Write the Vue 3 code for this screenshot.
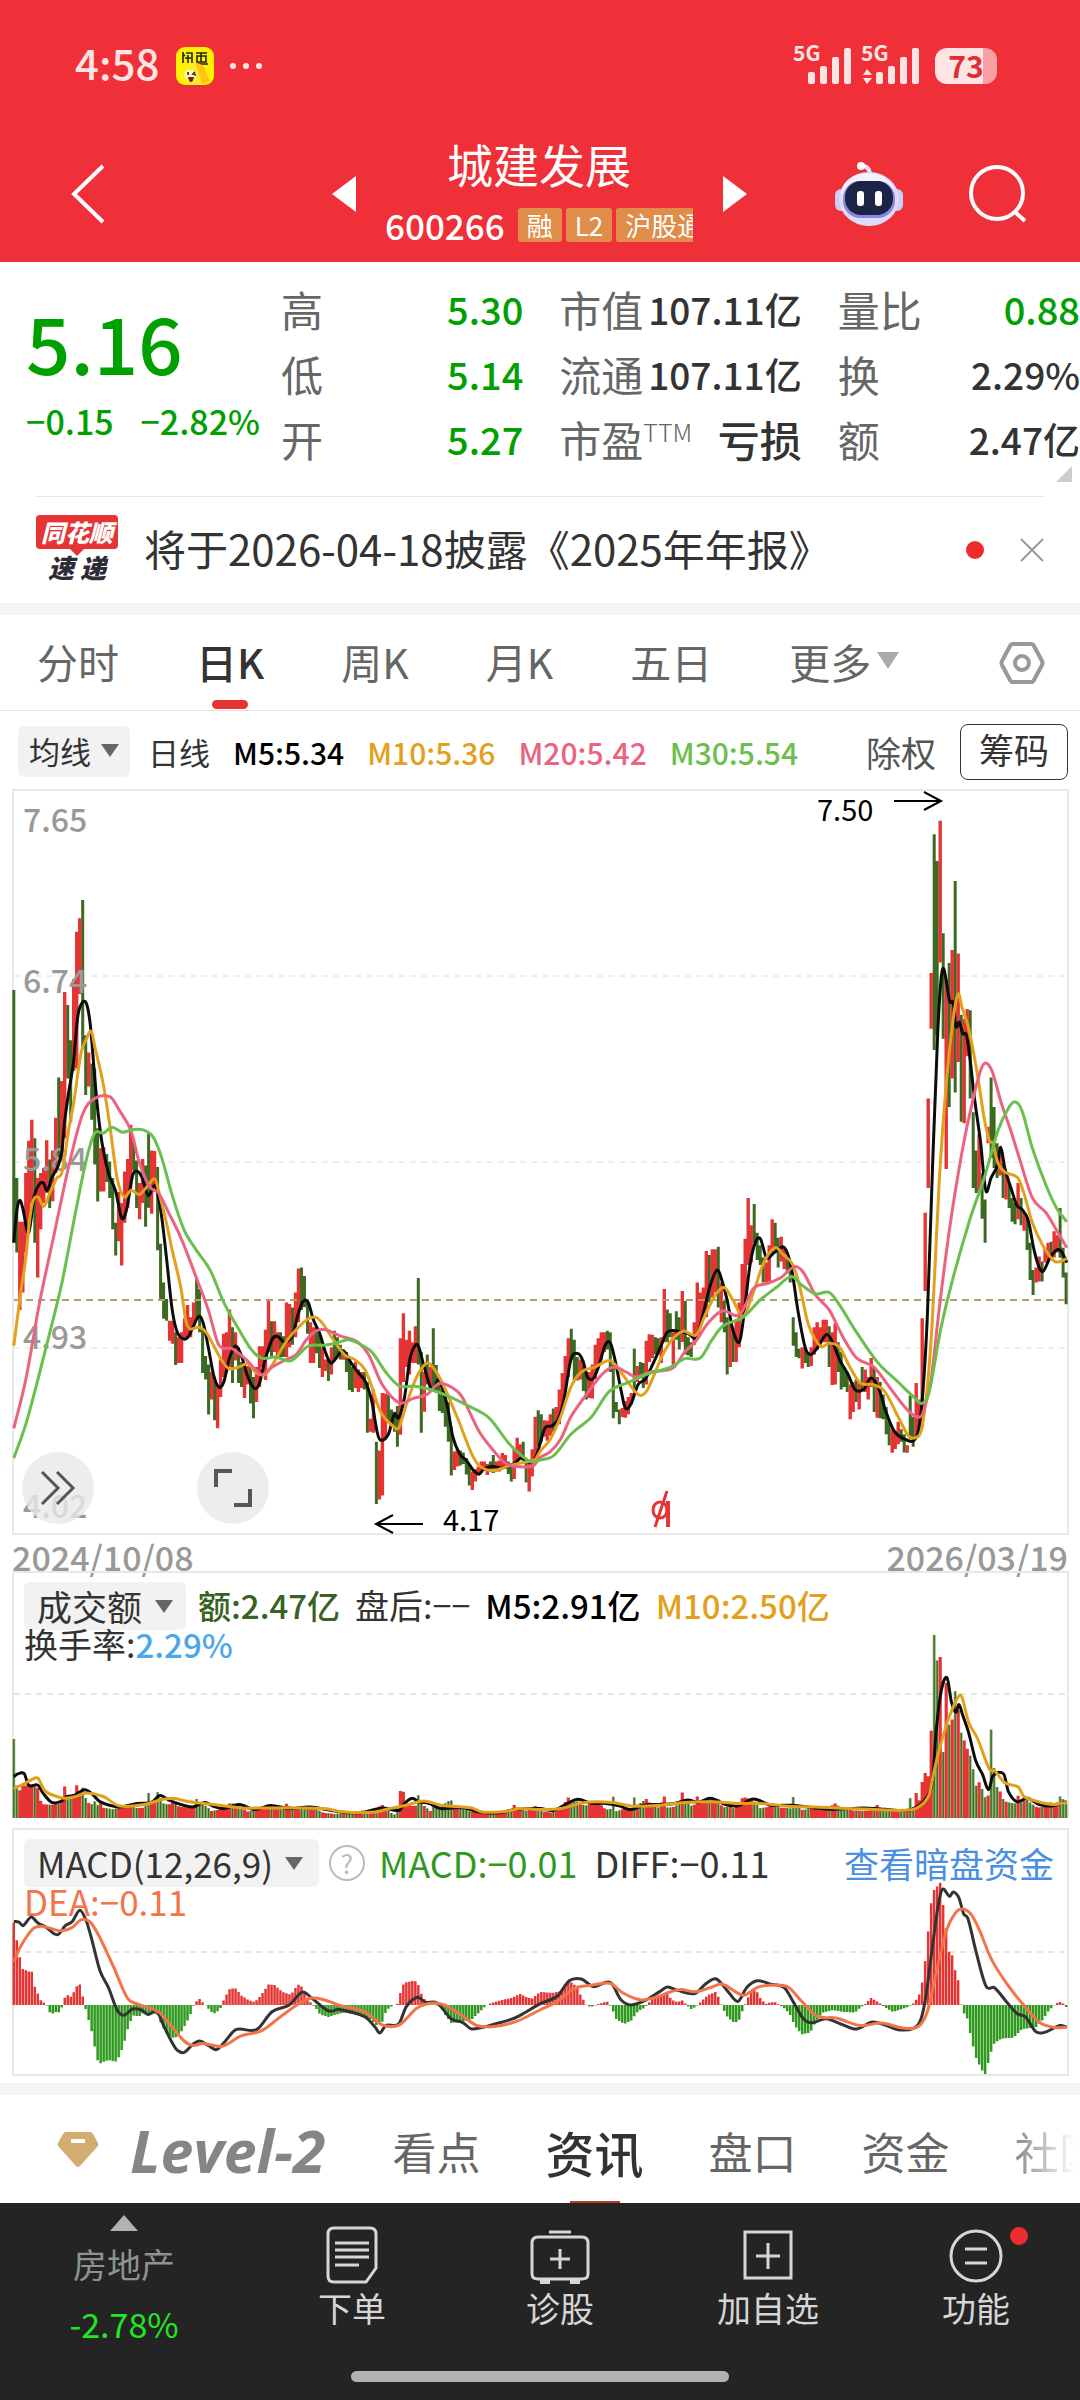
<script setup>
import { ref } from 'vue'

/* Chart data is stored in chart units; UX and UY are units per pixel. */
const UX = 2.904
const UY = 2.01
const HALF = 1568

const sx = (x) => Math.round((x / UX) * 10) / 10
const priceY = (y) => Math.round((y / UY) * 10) / 10
const volumeY = (y) => Math.round((y / UX - 31) * 10) / 10
const macdY = (y) => Math.round((y / UX - 288) * 10) / 10

const candlesA = `g422-930 g800-950 r888-1065 r888-1030 r790-950 r725-900 r683-850 g720-930 r800-1000 r790-903 r780-850 r724-830 g763-860 r745-847 r679-790 g598-770 r605-760 r426-720 g452-600 g523-688 r400-585 r305-580 r278-430 g241-535 g513-633 r548-616 g570-683 g580-773 g700-847 r740-827 r738-827 g752-808 g767-840 g800-903 g890-956 r828-927 r850-976 r787-890 r762-860 r693-820 g725-785 g765-860 r810-883 r762-850 g775-898 g709-860 r745-872 r746-825 g778-945 g932-1045 g1010-1083 g1043-1087 r1087-1127 r1087-1133 g1110-1176 r1120-1172 r1110-1172 r1082-1125 r1055-1120 r1080-1120 r1050-1105 g1000-1085 g1023-1110 g1100-1192 g1158-1205 g1175-1275 r1190-1245 g1200-1287 r1215-1303 r1165-1240 r1113-1200 r1110-1190 r1064-1180 g1100-1212 r1110-1167 g1140-1212 g1170-1220 r1180-1242 r1178-1215 g1180-1253 g1200-1283 r1180-1250 r1138-1220 r1138-1180 r1105-1206 r1047-1150 g1088-1160 r1088-1150 r1110-1160 g1110-1160 g1118-1160 r1050-1160 r1053-1140 g1060-1135 r1030-1120 r982-1090 g980-1065 g997-1060 g1045-1113 r1090-1172 r1100-1172 g1100-1152 g1115-1182 r1140-1200 r1165-1188 g1165-1208 r1140-1195 g1107-1165 g1120-1160 g1135-1165 r1145-1165 g1150-1190 g1160-1226 g1180-1230 r1170-1222 r1185-1230 r1190-1222 g1190-1225 g1210-1312 r1284-1310 r1225-1312 g1330-1455 r1348-1446 r1232-1438 r1233-1325 g1235-1290 g1265-1298 g1270-1310 g1258-1340 r1122-1316 r1072-1210 r1125-1180 r1107-1195 r1130-1172 r1098-1172 g1001-1175 g1150-1312 r1190-1270 g1155-1215 r1180-1220 g1102-1220 g1176-1232 g1210-1268 g1225-1272 g1230-1300 g1250-1330 g1300-1398 r1350-1387 r1345-1380 g1348-1378 g1352-1375 g1363-1396 g1375-1418 r1390-1427 r1385-1410 r1380-1398 r1370-1390 r1370-1388 r1375-1397 g1370-1390 g1357-1393 r1370-1390 r1368-1390 r1353-1385 r1357-1385 g1370-1395 g1375-1410 r1345-1405 r1322-1370 r1335-1365 g1330-1370 g1363-1412 r1370-1430 r1345-1400 r1280-1375 g1267-1340`
const candlesB = `g1275-1330 r1287-1320 r1288-1328 r1275-1318 g1263-1310 r1260-1300 r1225-1295 r1192-1270 r1158-1230 r1122-1200 g1103-1165 g1125-1207 g1160-1207 r1165-1205 g1175-1228 g1190-1245 r1190-1242 r1175-1243 r1135-1205 r1122-1180 r1110-1165 r1110-1150 g1107-1145 g1110-1190 g1175-1283 g1250-1270 g1265-1295 r1262-1280 r1248-1282 r1240-1275 r1232-1255 g1143-1230 r1178-1210 g1170-1200 g1172-1222 r1127-1215 r1114-1170 r1115-1162 g1120-1155 g1122-1155 r1120-1172 r1023-1130 g1064-1130 g1072-1120 r1110-1180 g1068-1125 g1080-1145 r1027-1130 g1047-1155 g1120-1157 g1130-1160 r1090-1135 r1010-1125 r1030-1100 r1020-1080 r947-1080 g955-1050 r943-1040 r943-1030 g938-1060 r1010-1090 g1045-1110 g1080-1195 r1090-1180 g1100-1170 r1085-1170 r1050-1140 r973-1080 r922-1050 r840-975 r895-970 g852-930 g910-965 g935-975 g960-1010 r970-1010 r935-1008 r883-950 g890-945 g920-980 r918-968 r940-983 g960-990 g970-1010 g1080-1137 g1110-1160 g1143-1162 r1140-1183 g1140-1172 g1150-1180 r1140-1178 r1100-1155 r1090-1145 r1100-1135 r1085-1130 r1085-1130 g1098-1180 r1110-1216 r1092-1215 g1130-1190 g1150-1225 g1180-1220 g1190-1230 r1215-1285 r1210-1270 g1205-1250 r1210-1265 g1180-1228 r1185-1230 r1200-1245 r1162-1220 g1180-1270 r1200-1282 g1210-1283 g1235-1285 g1260-1315 g1290-1337 r1305-1352 r1310-1345 r1290-1335 g1305-1330 g1315-1352 r1337-1352 g1237-1325 g1280-1340 r1212-1320 r1245-1310 r1082-1300 r870-1027 r640-820 r388-500 g109-543 g163-513 r82-367 g308-520 r400-782 g368-657 r342-600 g203-628 r349-567 g472-687 r480-690 r460-555 g463-640 g668-820 g745-830 r712-830 g790-882 g843-930 r697-730 g598-760 g657-780 g730-800 r750-795 g770-840 r790-843 g810-860 g840-888 g850-893 r810-883 g840-895 r870-906 g880-945 g930-1005 g985-1035 r980-1010 r958-1008 g968-1008 r942-970 r930-965 g928-960 r907-960 r915-950 g860-960 g940-1000 g990-1054`

const parseCandles = (text, from, to) => {
  const items = text.split(' ')
  const step = (to - from) / (items.length - 1)
  return items.map((item, i) => {
    const [top, bottom] = item.slice(1).split('-').map(Number)
    return { x: from + i * step, up: item[0] === 'r', top, bottom }
  })
}
const candles = [...parseCandles(candlesA, 40, 1563), ...parseCandles(candlesB, HALF + 4, HALF + 1528)]

const points = (left, right) => {
  const read = (text, shift) =>
    text.split(' ').map((pair) => {
      const [x, y] = pair.split(/[,:]/).map(Number)
      return [x + shift, y]
    })
  return [...read(left, 0), ...read(right, HALF)]
}

/* Smooth path through the points */
const curve = (list, toY) => {
  const p = list.map(([x, y]) => [sx(x), toY(y)])
  let d = `M${p[0][0]} ${p[0][1]}`
  for (let i = 0; i < p.length - 1; i++) {
    const a = p[Math.max(i - 1, 0)]
    const b = p[i]
    const c = p[i + 1]
    const e = p[Math.min(i + 2, p.length - 1)]
    const n = (v) => v.toFixed(1)
    const k = (c[0] - b[0]) / 3
    const sb = (c[1] - a[1]) / (c[0] - a[0] || 1)
    const sc = (e[1] - b[1]) / (e[0] - b[0] || 1)
    d += `C${n(b[0] + k)} ${n(b[1] + sb * k)} ${n(c[0] - k)} ${n(c[1] - sc * k)} ${c[0]} ${c[1]}`
  }
  return d
}

const sample = (list, x) => {
  if (x <= list[0][0]) return list[0][1]
  for (let i = 1; i < list.length; i++) {
    if (x <= list[i][0]) {
      const [x0, y0] = list[i - 1]
      const [x1, y1] = list[i]
      return y0 + ((y1 - y0) * (x - x0)) / (x1 - x0)
    }
  }
  return list[list.length - 1][1]
}

const ma30 = curve(points('40,1363 75,1295 110,1205 145,1110 180,1010 215,885 250,765 275,710 300,710 325,698 355,708 385,703 415,703 445,718 470,760 500,835 535,905 570,945 610,985 650,1050 690,1100 730,1145 760,1162 800,1160 845,1167 895,1138 940,1136 975,1132 1010,1125 1040,1132 1080,1150 1120,1190 1160,1218 1200,1218 1250,1225 1300,1238 1360,1258 1420,1282 1480,1335 1540,1370', '0,1367 40,1358 90,1315 150,1280 200,1230 260,1210 320,1192 380,1180 420,1163 465,1162 500,1125 530,1098 590,1080 640,1045 690,1018 730,998 760,1015 800,1033 840,1030 870,1055 910,1100 980,1170 1040,1210 1085,1240 1110,1253 1130,1230 1165,1100 1200,1000 1250,880 1290,800 1330,705 1360,660 1380,647 1400,665 1430,740 1470,815 1500,860 1530,888'), priceY)
const ma20 = curve(points('40,1303 75,1205 115,1050 155,920 200,775 240,672 275,640 320,637 345,662 380,705 405,770 435,818 460,830 490,870 525,920 570,1000 605,1065 635,1135 675,1143 715,1165 760,1195 790,1180 830,1165 860,1155 890,1125 920,1107 945,1105 990,1118 1035,1128 1070,1155 1110,1215 1160,1252 1200,1243 1240,1235 1275,1213 1310,1220 1340,1238 1390,1308 1430,1345 1465,1372 1500,1380 1550,1378', '0,1362 30,1350 60,1325 90,1280 130,1240 180,1195 215,1180 250,1190 280,1200 320,1190 350,1188 390,1180 420,1150 450,1130 490,1090 530,1067 580,1075 620,1022 660,1012 700,1000 740,978 765,990 800,1035 840,1065 880,1120 920,1162 970,1180 1020,1225 1070,1268 1105,1280 1120,1255 1135,1210 1160,1060 1190,900 1225,750 1255,650 1285,575 1310,580 1340,650 1365,700 1390,755 1430,840 1470,870 1500,905 1530,940'), priceY)
const ma10 = curve(points('40,1137 60,1030 75,960 85,890 95,848 110,838 127,857 145,830 165,800 180,788 200,700 215,645 235,550 250,522 265,505 275,535 300,612 320,700 340,800 360,838 380,825 405,833 430,815 450,802 462,830 480,880 500,945 525,1020 540,1088 552,1103 578,1100 600,1112 640,1162 665,1183 700,1178 720,1173 745,1192 770,1195 800,1165 830,1130 860,1105 895,1083 918,1080 940,1095 965,1122 1000,1155 1030,1165 1060,1185 1080,1220 1105,1270 1140,1298 1158,1302 1180,1255 1210,1200 1240,1172 1265,1188 1290,1220 1330,1285 1370,1355 1395,1380 1435,1388 1480,1378 1530,1370 1555,1365', '0,1350 30,1325 60,1280 90,1220 120,1190 160,1180 205,1167 240,1195 275,1228 295,1237 315,1222 350,1165 380,1128 415,1108 455,1115 480,1075 510,1035 535,1020 560,1045 590,1078 620,1030 650,970 683,940 705,953 735,975 755,1020 780,1095 815,1138 840,1132 870,1140 900,1180 930,1212 965,1215 1000,1228 1040,1280 1070,1318 1090,1322 1108,1305 1125,1220 1140,1080 1160,800 1180,610 1200,480 1215,430 1225,455 1245,500 1270,590 1290,680 1305,725 1315,730 1330,770 1350,788 1388,800 1405,830 1430,890 1460,935 1495,968 1530,962'), priceY)
const ma5 = curve(points('40,930 48,870 57,845 66,860 83,910 100,835 115,812 126,810 137,825 150,800 169,775 180,745 187,690 200,625 213,570 225,480 235,452 250,448 262,490 274,590 285,670 300,745 317,795 335,825 352,878 360,880 370,855 385,795 400,787 413,800 430,835 448,815 456,825 470,880 485,970 500,1065 515,1110 535,1124 548,1118 560,1100 578,1078 590,1092 605,1140 620,1195 635,1220 650,1210 665,1165 683,1138 700,1155 720,1200 738,1222 752,1215 770,1165 790,1125 805,1118 828,1130 850,1115 865,1075 880,1048 895,1050 910,1085 930,1115 945,1150 960,1172 975,1163 997,1147 1020,1172 1045,1195 1062,1210 1080,1250 1095,1310 1105,1327 1128,1315 1145,1275 1158,1282 1175,1240 1190,1165 1205,1137 1215,1138 1230,1175 1250,1220 1262,1222 1272,1205 1285,1222 1300,1262 1315,1320 1335,1355 1355,1368 1375,1388 1392,1395 1405,1385 1430,1380 1460,1382 1490,1375 1515,1363 1540,1372 1555,1362', '0,1335 15,1302 35,1298 55,1282 70,1245 90,1165 110,1153 125,1168 138,1200 155,1203 170,1180 190,1135 205,1132 220,1172 235,1225 248,1262 265,1253 285,1215 305,1205 325,1178 350,1140 370,1110 400,1108 430,1112 455,1120 475,1070 495,1015 515,985 530,1010 545,1050 560,1105 580,1128 595,1060 610,975 625,930 640,922 658,960 680,950 710,940 730,980 750,1070 770,1140 785,1155 805,1142 832,1115 850,1130 870,1165 895,1195 915,1225 940,1225 962,1202 985,1225 1005,1270 1030,1310 1060,1325 1085,1328 1100,1305 1112,1230 1125,1080 1140,780 1155,510 1165,400 1173,380 1190,445 1200,448 1208,495 1218,487 1228,510 1238,512 1248,555 1262,640 1280,730 1288,790 1296,828 1310,800 1328,775 1338,738 1350,780 1370,825 1385,855 1400,863 1418,885 1435,945 1450,980 1462,987 1480,962 1500,945 1515,948 1530,970'), priceY)

const volumeShape = points('40:229 48:95 57:80 66:95 100:92 109:90 117:52 126:40 152:38 161:42 170:40 178:45 187:95 195:65 213:65 221:100 230:75 239:92 248:60 256:45 265:38 274:50 282:35 291:45 300:30 330:25 340:30 380:35 400:28 413:30 422:30 430:78 439:50 448:50 456:78 465:60 474:42 491:38 500:50 520:33 560:28 570:57 578:40 587:38 600:35 613:20 640:25 665:42 674:42 683:40 700:32 720:18 740:25 760:33 779:35 800:28 820:25 831:42 850:28 880:26 900:30 920:25 940:15 970:12 1000:13 1030:12 1060:14 1085:25 1110:38 1130:18 1145:10 1153:25 1162:78 1171:78 1180:42 1197:35 1206:35 1214:68 1223:48 1232:35 1250:20 1258:35 1275:28 1300:48 1310:52 1320:28 1345:30 1360:20 1400:15 1430:12 1460:14 1485:22 1493:38 1502:25 1530:20 1554:35 1563:28', '4:20 30:16 48:25 65:32 82:60 91:45 110:48 130:35 150:42 175:40 190:25 204:25 213:62 222:18 245:28 265:28 274:60 283:38 309:55 320:42 345:30 361:63 370:30 390:32 405:42 413:75 422:52 445:30 457:63 466:45 490:55 518:55 530:30 553:35 565:25 588:58 596:60 620:50 640:28 675:35 700:30 727:28 736:63 744:35 765:22 790:30 820:22 858:42 880:25 910:22 950:20 980:38 1000:20 1040:22 1067:20 1075:58 1084:30 1093:75 1101:50 1110:105 1119:132 1127:115 1136:250 1145:537 1154:453 1162:475 1171:190 1180:400 1188:270 1197:285 1206:370 1215:310 1223:248 1232:225 1241:200 1249:182 1258:142 1267:92 1275:105 1284:85 1293:60 1301:52 1310:260 1319:145 1328:88 1336:78 1345:55 1354:47 1380:42 1388:66 1397:45 1414:55 1423:45 1445:30 1460:32 1484:45 1493:40 1502:45 1510:63 1519:55 1528:40')
const volM5 = curve(points('40,688 50,680 70,678 83,712 110,712 125,735 150,762 175,760 195,745 215,742 245,725 265,735 290,760 345,775 400,765 440,762 465,742 490,755 525,768 560,775 595,762 620,773 650,780 695,768 740,783 785,771 840,780 900,775 960,785 1010,792 1060,790 1110,778 1160,785 1175,765 1197,750 1215,760 1245,765 1280,780 1310,778 1350,778 1390,790 1450,792 1500,782', '0,780 40,785 80,765 110,753 150,765 190,765 230,772 265,783 300,770 350,768 390,765 430,755 460,762 495,750 540,768 575,772 620,752 670,770 730,770 800,778 850,782 940,778 1000,782 1070,785 1105,768 1125,745 1140,700 1150,560 1165,440 1182,400 1195,470 1208,500 1217,478 1228,510 1245,560 1265,640 1285,680 1303,725 1315,685 1347,680 1360,730 1385,760 1415,750 1450,768 1490,772 1530,760'), volumeY)
const volM10 = curve(points('40,722 70,708 90,697 110,692 130,728 165,745 190,750 220,745 250,735 300,745 345,772 420,768 465,755 500,750 550,760 620,768 700,778 780,778 860,778 940,780 1000,790 1090,790 1130,780 1180,770 1230,758 1280,770 1370,778 1400,790 1470,788 1510,780', '0,783 60,780 130,762 210,762 270,773 350,770 420,762 500,760 570,765 640,765 720,773 800,775 860,778 960,782 1060,785 1100,775 1130,740 1145,670 1165,590 1190,510 1215,455 1225,455 1245,530 1270,575 1305,665 1320,670 1350,705 1390,718 1405,745 1440,758 1490,768 1530,762'), volumeY)

const macdShape = points('40:238 48:192 57:140 66:105 83:97 92:98 100:55 109:35 117:15 126:8 135:0 143:-20 152:-25 161:-20 170:-22 178:-12 187:20 195:30 204:22 213:35 221:52 230:65 239:30 248:-8 256:-38 265:-70 274:-115 282:-158 291:-170 300:-165 317:-160 335:-165 343:-155 352:-135 361:-108 369:-75 378:-50 387:-30 404:-33 420:-20 435:-28 456:-25 470:-60 485:-85 500:-95 517:-93 530:-72 545:-45 556:-20 563:0 570:10 580:18 590:6 600:-4 613:-20 625:-25 640:-10 650:15 660:35 668:48 685:48 700:28 720:15 740:8 755:25 780:60 797:58 820:38 845:30 857:48 868:60 880:50 890:25 905:3 918:-10 930:-28 955:-35 975:-28 1000:-22 1050:-30 1075:-40 1095:-60 1110:-50 1118:-25 1130:-8 1150:2 1158:5 1165:50 1175:65 1200:70 1212:68 1220:40 1230:20 1245:5 1280:-5 1290:-25 1310:-52 1345:-48 1370:-42 1395:-18 1410:-3 1425:5 1460:15 1485:20 1510:32 1530:22 1545:18', '0:38 35:35 60:40 85:70 105:55 120:25 135:0 145:-5 155:-4 170:3 195:10 210:-10 220:-40 245:-55 265:-45 285:-18 305:-8 312:2 330:22 370:35 382:15 400:8 415:14 425:0 440:-12 455:-3 470:12 490:30 510:38 520:20 530:-8 545:-35 565:-53 580:-42 590:-10 600:10 610:35 625:48 640:20 655:3 670:8 685:8 695:0 710:-10 725:-25 740:-60 760:-85 785:-80 800:-50 820:-22 850:-15 880:-20 915:-22 930:-8 945:3 962:20 980:10 1000:-5 1025:-20 1050:-12 1070:-5 1085:5 1100:25 1110:65 1119:130 1127:210 1136:295 1145:335 1154:345 1162:357 1171:290 1180:220 1188:155 1197:145 1206:100 1215:70 1223:2 1232:-25 1241:-40 1249:-80 1258:-120 1267:-155 1284:-190 1295:-203 1305:-150 1320:-110 1340:-98 1375:-95 1400:-70 1440:-65 1455:-50 1475:-20 1490:-3 1500:5 1515:10 1528:-6')
const diff = curve(points('40,1108 55,1110 67,1120 90,1095 110,1112 135,1125 155,1142 170,1145 190,1120 210,1108 232,1075 250,1105 265,1155 290,1250 315,1300 340,1365 360,1380 385,1362 410,1365 430,1378 455,1368 475,1410 500,1460 515,1482 535,1488 560,1465 580,1455 605,1468 628,1480 650,1460 685,1422 745,1422 790,1370 840,1350 878,1313 905,1330 955,1368 985,1363 1060,1385 1090,1415 1103,1432 1120,1410 1158,1405 1180,1355 1212,1328 1235,1342 1270,1345 1310,1390 1345,1402 1370,1420 1440,1405 1490,1390 1520,1375', '0,1347 50,1325 85,1280 120,1275 155,1297 205,1285 235,1335 265,1350 310,1335 350,1310 370,1298 400,1308 450,1317 480,1290 512,1275 545,1310 575,1340 600,1300 630,1280 670,1290 710,1300 735,1340 765,1390 790,1402 830,1390 880,1408 920,1420 965,1400 1000,1408 1040,1422 1085,1418 1105,1395 1120,1330 1140,1180 1155,1070 1168,1015 1190,1035 1200,1022 1217,1040 1230,1085 1243,1100 1265,1190 1295,1295 1320,1300 1350,1335 1385,1375 1410,1385 1440,1428 1465,1430 1510,1410 1530,1415'), macdY)
const dea = curve(points('40,1225 60,1180 95,1130 125,1122 175,1135 210,1125 235,1103 260,1108 285,1145 330,1240 370,1330 400,1348 460,1370 500,1415 535,1455 560,1468 590,1462 645,1470 700,1440 760,1425 820,1380 870,1345 905,1330 940,1335 990,1352 1060,1370 1110,1408 1160,1408 1210,1360 1250,1345 1290,1350 1340,1380 1385,1410 1440,1412 1500,1398', '0,1365 50,1340 100,1302 150,1293 205,1288 240,1315 290,1335 330,1330 380,1312 410,1305 450,1312 500,1298 530,1290 590,1322 630,1300 670,1293 720,1298 760,1340 805,1383 860,1388 930,1410 990,1403 1060,1418 1100,1412 1125,1370 1150,1260 1180,1135 1205,1085 1225,1072 1250,1085 1275,1130 1310,1215 1350,1280 1400,1345 1450,1400 1490,1415 1530,1415'), macdY)

const bars = (list, width, rect) =>
  list.map((c) => {
    const [y, h] = rect(c)
    return `M${(c.x / UX - width / 2).toFixed(1)} ${y.toFixed(1)}h${width}v${h.toFixed(1)}h${-width}z`
  }).join('')
const up = candles.filter((c) => c.up)
const down = candles.filter((c) => !c.up)
const candleRect = (c) => [c.top / UY, (c.bottom - c.top) / UY]
const volumeRect = (c) => {
  const h = sample(volumeShape, c.x) / UX
  return [247 - h, h]
}
const candleUp = bars(up, 3.4, candleRect)
const candleDown = bars(down, 3, candleRect)
const volumeUp = bars(up, 3.2, volumeRect)
const volumeDown = bars(down, 3, volumeRect)
const volumeDownCore = bars(down, 1.4, volumeRect)
const macdBars = candles.map((c) => ({ x: c.x, v: sample(macdShape, c.x) / UX }))
const macdUp = bars(macdBars.filter((b) => b.v >= 0), 2.5, (b) => [177 - b.v, b.v])
const macdDown = bars(macdBars.filter((b) => b.v < 0), 2.5, (b) => [177, -b.v])

const periods = ['分时', '日K', '周K', '月K', '五日']
const period = ref('日K')
const scales = [['7.65', 52], ['6.74', 213], ['5.84', 391], ['4.93', 569], ['4.02', 738]]
const quotes = [
  [['高', '5.30', 'down'], ['低', '5.14', 'down'], ['开', '5.27', 'down']],
  [['市值', '107.11亿', ''], ['流通', '107.11亿', ''], ['市盈', '亏损', 'loss']],
  [['量比', '0.88', 'down'], ['换', '2.29%', ''], ['额', '2.47亿', '']],
]
const sections = ['看点', '资讯', '盘口', '资金', '社区']
const section = ref('资讯')
</script>

<template>
  <div class="app">
    <header class="top">
      <div class="status">
        <span class="clock">4:58</span>
        <svg class="fish" viewBox="0 0 38 38" width="38" height="38">
          <rect width="38" height="38" rx="9" fill="#fff200" />
          <path d="M7 5v11M7 7l2 2M10 6h6v10M9 11h6M12 8v8M20 6h11M21 9h9v6h-9zM25 6v9M20 17h12" stroke="#222" stroke-width="1.6" fill="none" />
          <circle cx="19" cy="27" r="11" fill="#ffea2e" /><path d="M20 17q9-1 11 11l3 6-8 3z" fill="#ffc414" />
          <ellipse cx="14" cy="28" rx="6" ry="5" fill="#fff9b8" />
          <path d="M12 25v3M19 25l-2 2 3 1" stroke="#222" stroke-width="1.6" fill="none" /><path d="M12 30h6q-1 5-3 5t-3-5z" fill="#7a1c12" />
        </svg>
        <svg viewBox="0 0 34 8" width="34" height="8" fill="#ffe4e4"><circle cx="4" cy="4" r="3" /><circle cx="17" cy="4" r="3" /><circle cx="30" cy="4" r="3" /></svg>
        <div class="signals">
          <div class="signal">
            <span>5G</span>
            <svg viewBox="0 0 60 36" width="60" height="36" fill="#ffe4e4"><rect x="15" y="24" width="7" height="12" rx="2" /><rect x="27" y="18" width="7" height="18" rx="2" /><rect x="39" y="9" width="7" height="27" rx="2" /><rect x="51" y="0" width="7" height="36" rx="2" /></svg>
          </div>
          <div class="signal">
            <span>5G</span>
            <svg viewBox="0 0 60 36" width="60" height="36" fill="#ffe4e4"><path d="M2 27l4-6 5 6zM2 30l4 6 5-6z" /><rect x="15" y="24" width="7" height="12" rx="2" /><rect x="27" y="18" width="7" height="18" rx="2" /><rect x="39" y="9" width="7" height="27" rx="2" /><rect x="51" y="0" width="7" height="36" rx="2" /></svg>
          </div>
        </div>
        <div class="battery"><span>73</span></div>
      </div>
      <nav class="title-bar">
        <button class="back" aria-label="返回"><svg viewBox="0 0 36 60" width="36" height="60"><path d="M33 2L4 30l29 28" fill="none" stroke="#fff" stroke-width="4" /></svg></button>
        <button class="step prev" aria-label="上一只"><svg viewBox="0 0 24 36" width="24" height="36"><path d="M24 0v36L0 18z" fill="#fff" /></svg></button>
        <div class="stock">
          <h1>城建发展</h1>
          <div class="code"><span class="num">600266</span><span class="tag">融</span><span class="tag">L2</span><span class="tag">沪股通</span></div>
        </div>
        <button class="step next" aria-label="下一只"><svg viewBox="0 0 24 36" width="24" height="36"><path d="M0 0v36l24-18z" fill="#fff" /></svg></button>
        <button class="robot" aria-label="智能助手">
          <svg viewBox="0 0 68 66" width="68" height="66">
            <path d="M35 14q0-9-10-10" fill="none" stroke="#e5e0ff" stroke-width="4" /><circle cx="26" cy="5" r="4" fill="#fff" />
            <rect x="0" y="28" width="12" height="22" rx="6" fill="#c9cdfb" /><rect x="56" y="28" width="12" height="22" rx="6" fill="#c9cdfb" />
            <ellipse cx="34" cy="38" rx="30" ry="27" fill="#dcdcfa" /><ellipse cx="33" cy="31" rx="26" ry="19" fill="#f4f2ff" />
            <rect x="8" y="20" width="52" height="37" rx="17" fill="#8d86e0" /><rect x="10" y="20" width="48" height="34" rx="16" fill="#1b2444" />
            <rect x="22" y="30" width="7" height="15" rx="3" fill="#fff" /><rect x="40" y="30" width="7" height="15" rx="3" fill="#fff" />
          </svg>
        </button>
        <button class="search" aria-label="搜索"><svg viewBox="0 0 60 60" width="60" height="60" fill="none" stroke="#fff" stroke-width="4"><circle cx="29" cy="29" r="26" /><path d="M47 48l10 9" /></svg></button>
      </nav>
    </header>

    <section class="quote">
      <div class="price">
        <strong>5.16</strong>
        <div class="change"><span>−0.15</span><span>−2.82%</span></div>
      </div>
      <dl v-for="(col, i) in quotes" :key="i">
        <div v-for="q in col" :key="q[0]">
          <dt>{{ q[0] }}<sup v-if="q[2] === 'loss'">TTM</sup></dt>
          <dd :class="q[2]">{{ q[1] }}</dd>
        </div>
      </dl>
      <i class="corner"></i>
    </section>

    <section class="news">
      <div class="logo"><b>同花顺</b><em>速 递</em></div>
      <a href="#">将于2026-04-18披露《2025年年报》</a>
      <i class="dot"></i>
      <button aria-label="关闭"><svg viewBox="0 0 24 24" width="24" height="24"><path d="M1 1l22 22M23 1L1 23" stroke="#999" stroke-width="2" /></svg></button>
    </section>

    <nav class="periods">
      <button v-for="p in periods" :key="p" :class="{ on: p === period }" @click="period = p">{{ p }}</button>
      <button>更多<i class="tri"></i></button>
      <button class="gear" aria-label="设置"><svg viewBox="0 0 46 44" width="46" height="44" fill="none" stroke="#999" stroke-width="4"><path d="M14 3h18q2 0 3 2l8 15q1 2 0 4l-8 15q-1 2-3 2H14q-2 0-3-2L3 24q-1-2 0-4l8-15q1-2 3-2z" /><circle cx="23" cy="22" r="7" /></svg></button>
    </nav>

    <div class="averages">
      <label class="pick small"><select aria-label="主图指标"><option>均线</option></select><i class="tri"></i></label>
      <span class="line">日线</span>
      <span class="m5">M5:5.34</span><span class="m10">M10:5.36</span><span class="m20">M20:5.42</span><span class="m30">M30:5.54</span>
      <button class="rights">除权</button>
      <button class="chips">筹码</button>
    </div>

    <section class="panel">
      <svg class="chart" viewBox="0 0 1080 791">
        <rect x="13" y="10" width="1055" height="744" fill="none" stroke="#e8e8e8" stroke-width="2" />
        <path d="M14 196H1067M14 382H1067M14 568H1067" stroke="#dedede" stroke-dasharray="6 5" />
        <path :d="candleDown" fill="#3c6a22" />
        <path :d="candleUp" fill="#e43534" />
        <path d="M14 520H1067" stroke="#b39e68" stroke-width="2" stroke-dasharray="7 5" />
        <g class="scale"><text v-for="s in scales" :key="s[0]" x="23" :y="s[1]">{{ s[0] }}</text></g>
        <g fill="none" stroke-width="3" stroke-linejoin="round">
          <path :d="ma5" stroke="#0c0c0c" />
          <path :d="ma10" stroke="#e2a01c" />
          <path :d="ma20" stroke="#eb6380" />
          <path :d="ma30" stroke="#6bbf4c" />
        </g>
        <g fill="none" stroke="#000" stroke-width="2"><path d="M894 21h46M924 12l17 9-17 9" /><path d="M423 744h-46M393 735l-17 9 17 9" /></g>
        <g class="peak"><text x="817" y="41">7.50</text><text x="443" y="751">4.17</text></g>
        <g fill="none" stroke="#e43534"><path d="M668 721v26" stroke-width="4" /><ellipse cx="660" cy="730" rx="7" ry="8" stroke-width="3" /><path d="M655 747l12-36" stroke-width="3" /></g>
        <g class="scale dates"><text x="12" y="791">2024/10/08</text><text x="1068" y="791" text-anchor="end">2026/03/19</text></g>
      </svg>
      <button class="round expand" aria-label="展开"><svg viewBox="0 0 36 36" width="36" height="36" fill="none" stroke="#555" stroke-width="3"><path d="M2 2l16 16L2 34M17 2l16 16-16 16" /></svg></button>
      <button class="round full" aria-label="全屏"><svg viewBox="0 0 38 38" width="38" height="38" fill="none" stroke="#555" stroke-width="4"><path d="M2 18V2h16M36 20v16H20" /></svg></button>
    </section>

    <section class="panel">
      <svg class="chart" viewBox="0 0 1080 257">
        <path d="M13 247V1H1068V247" fill="none" stroke="#e8e8e8" stroke-width="2" />
        <path d="M14 123H1067" stroke="#e6e6e6" stroke-width="2" stroke-dasharray="6 5" />
        <path :d="volumeDown" fill="#8fb77c" /><path :d="volumeDownCore" fill="#3c6a22" /><path :d="volumeUp" fill="#e43534" />
        <path :d="volM5" class="avg" stroke="#0c0c0c" /><path :d="volM10" class="avg" stroke="#e2a01c" />
      </svg>
      <div class="legend">
        <label class="pick"><select aria-label="副图指标一"><option>成交额</option></select><i class="tri"></i></label>
        <span class="amount">额:2.47亿</span><span>盘后:−−</span><span class="m5">M5:2.91亿</span><span class="m10">M10:2.50亿</span>
        <p>换手率:<span class="rate">2.29%</span></p>
      </div>
    </section>

    <section class="panel">
      <svg class="chart" viewBox="0 0 1080 255">
        <rect x="13" y="1" width="1055" height="246" fill="none" stroke="#e8e8e8" stroke-width="2" />
        <path d="M14 124H1067" stroke="#e6e6e6" stroke-width="2" stroke-dasharray="6 5" />
        <path :d="macdUp" fill="#e43534" /><path :d="macdDown" fill="#2f991e" />
      </svg>
      <div class="legend macd">
        <label class="pick"><select aria-label="副图指标二"><option>MACD(12,26,9)</option></select><i class="tri"></i></label>
        <button class="help" aria-label="指标说明">?</button>
        <span class="green">MACD:−0.01</span><span>DIFF:−0.11</span>
        <a href="#">查看暗盘资金</a>
        <p class="dea">DEA:−0.11</p>
      </div>
      <svg class="chart lines" viewBox="0 0 1080 255"><path :d="diff" class="avg" stroke="#333" /><path :d="dea" class="avg" stroke="#f4744a" /></svg>
    </section>

    <nav class="sections">
      <svg viewBox="0 0 42 38" width="42" height="38"><path d="M9 2h24q2 0 3 2l5 9q1 2-1 4L23 36q-2 2-4 0L2 17q-2-2-1-4l5-9q1-2 3-2z" fill="#d3ac72" /><path d="M14 11h14" stroke="#fff" stroke-width="4" /></svg>
      <button class="level">Level-2</button>
      <button v-for="s in sections" :key="s" :class="{ on: s === section }" @click="section = s">{{ s }}</button>
    </nav>

    <footer class="dock">
      <div class="actions">
        <button class="index"><i class="up"></i><span>房地产</span><b>-2.78%</b></button>
        <button><svg viewBox="0 0 60 60" width="60" height="60"><path d="M12 3h36q6 0 6 6v34L44 57H12q-6 0-6-6V9q0-6 6-6z" /><path d="M13 18h34M13 25h34M13 32h34M13 40h24" /></svg><span>下单</span></button>
        <button><svg viewBox="0 0 60 60" width="60" height="60"><path d="M19 7h22M8 12h44q6 0 6 6v31q0 5-6 5H8q-6 0-6-5V18q0-6 6-6zM30 24v20M20 34h20" /><path d="M10 57h10M40 57h10" stroke-width="4" /></svg><span>诊股</span></button>
        <button><svg viewBox="0 0 60 60" width="60" height="60"><path d="M7 7h46v46H7zM30 18v26M18 31h24" /></svg><span>加自选</span></button>
        <button><svg viewBox="0 0 60 60" width="60" height="60"><circle cx="30" cy="31" r="25" /><path d="M19 24h22M19 38h22" /></svg><span>功能</span><i class="badge"></i></button>
      </div>
      <i class="home"></i>
    </footer>
  </div>
</template>

<style>
body { margin: 0; background: #fff; }
</style>

<style scoped>
.app { width: 100%; overflow: hidden; background: #fff; color: #333; font-family: "Noto Sans CJK SC", sans-serif; }
button { border: 0; padding: 0; margin: 0; background: none; font: inherit; color: inherit; white-space: nowrap; }
a { color: inherit; text-decoration: none; }
svg { display: block; flex: none; }
h1, dl, dd, p { margin: 0; }

.top { background: #f03038; color: #fff; height: 262px; }
.status { display: flex; align-items: center; height: 132px; padding: 0 83px 0 75px; color: #ffe4e4; }
.clock { font-size: 42px; font-weight: 500; line-height: 60px; padding-bottom: 8px; margin-right: 17px; }
.fish { margin-right: 15px; }
.signals { display: flex; gap: 8px; margin-left: auto; }
.signal { position: relative; }
.signal span { position: absolute; left: 0; top: -7px; font-size: 21px; line-height: 22px; font-weight: 700; }
.battery { margin-left: 14px; width: 62px; height: 36px; border-radius: 12px; background: linear-gradient(90deg, #ffe4e4 48px, #f8a0a4 48px); color: #e02c34; font-size: 30px; line-height: 34px; font-weight: 700; text-align: center; }

.title-bar { display: flex; align-items: center; height: 124px; padding: 0 52px 0 70px; }
.prev { margin-left: 226px; }
.stock { width: 308px; margin: 0 30px 0 29px; overflow: hidden; }
.stock h1 { font-size: 46px; line-height: 62px; font-weight: 400; text-align: center; }
.code { display: flex; align-items: center; gap: 4px; height: 62px; }
.num { font-size: 35px; line-height: 60px; font-weight: 500; margin-right: 9px; }
.tag { flex: none; background: #e08d4a; border-radius: 3px; font-size: 26px; line-height: 34px; padding: 0 9px; }
.robot { margin-left: 88px; }
.search { margin-left: auto; }

.quote { position: relative; display: flex; gap: 36px; height: 234px; padding-left: 26px; }
.price { width: 219px; color: #00a000; white-space: nowrap; }
.price strong { display: block; font-size: 78px; line-height: 90px; font-weight: 500; margin-top: 34px; }
.change { display: flex; justify-content: space-between; width: 234px; font-size: 34px; line-height: 70px; font-weight: 500; }
.quote dl { flex: 1; padding-top: 14px; }
.quote dl div { display: flex; justify-content: space-between; align-items: center; height: 65px; white-space: nowrap; }
dt { font-size: 42px; line-height: 60px; color: #666; }
sup { font-size: 25px; font-weight: 300; line-height: 24px; }
dd { font-size: 37px; line-height: 60px; font-weight: 500; }
dd.down { font-size: 38px; color: #00a000; }
dd.loss { font-size: 42px; }
.corner { position: absolute; right: 8px; bottom: 14px; border: 8px solid; border-color: transparent #ccc #ccc transparent; }

.news { display: flex; align-items: center; height: 106px; margin: 0 36px; border-top: 1px solid #e9e9e9; }
.logo { width: 82px; margin-right: 26px; text-align: center; }
.logo b { position: relative; display: block; background: #e43534; color: #fff; border-radius: 4px; font-size: 24px; line-height: 34px; font-weight: 900; font-style: italic; }
.logo b::after { content: ""; position: absolute; left: 50%; top: 33px; margin-left: -8px; border: 8px solid transparent; border-top-color: #e43534; border-bottom: 0; }
.logo em { display: block; font-size: 26px; line-height: 36px; font-weight: 900; color: #2c2c34; }
.news a { font-size: 42px; line-height: 60px; white-space: nowrap; padding-bottom: 4px; }
.dot { width: 18px; height: 18px; border-radius: 9px; background: #ee2c2c; margin-left: auto; margin-right: 36px; }

.periods { display: flex; align-items: center; gap: 77px; height: 95px; padding: 0 35px 0 37px; border-top: 12px solid #f4f4f4; border-bottom: 1px solid #e2e2e2; font-size: 41px; color: #666; }
.periods button { position: relative; display: flex; align-items: center; gap: 6px; height: 95px; line-height: 60px; padding-bottom: 4px; box-sizing: border-box; }
.periods .on { color: #333; font-weight: 500; }
.periods .on::after { content: ""; position: absolute; left: 50%; bottom: 1px; width: 36px; height: 9px; margin-left: -18px; border-radius: 5px; background: #e43534; }
.periods .gear { margin-left: auto; padding: 0; }
.tri { border: 11px solid transparent; border-top: 17px solid #aaa; border-bottom: 0; }

.averages { display: flex; align-items: center; height: 69px; padding: 10px 12px 0 18px; box-sizing: border-box; height: 79px; margin-bottom: -10px; font-size: 31px; white-space: nowrap; }
.pick { display: inline-flex; align-items: center; background: #f2f2f2; border-radius: 6px; height: 48px; }
.pick select { appearance: none; border: 0; padding: 0; margin: 0; background: none; font: inherit; color: inherit; }
.pick .tri { border-width: 13px 9px 0; border-top-color: #666; }
.pick.small { height: 51px; width: 112px; padding: 0 0 3px 11px; box-sizing: border-box; gap: 10px; margin-top: -8px; }
.averages > span, .rights { margin-top: -8px; }
.line { margin: 0 23px 0 18px; }
.averages .m5, .averages .m10, .averages .m20 { margin-right: 23px; }
.averages .m5, .averages .m10, .averages .m20, .averages .m30 { font-weight: 500; font-size: 30px; }
.m5 { color: #000; }
.m10 { color: #e2a01c; }
.m20 { color: #eb6380; }
.m30 { color: #6bbf4c; }
.rights { margin-left: auto; font-size: 35px; color: #555; }
.chips { margin: -8px 0 0 24px; width: 108px; height: 56px; border: 1px solid #333; border-radius: 8px; font-size: 35px; line-height: 46px; padding-bottom: 6px; }

.panel { position: relative; }
.chart { width: 100%; height: auto; overflow: visible; }
.scale text { font-size: 32px; font-weight: 500; fill: #999; }
.dates text { font-size: 34px; }
.peak text { font-size: 29px; fill: #000; }
.avg { fill: none; stroke-width: 3px; stroke-linejoin: round; }
.round { position: absolute; bottom: 47px; width: 72px; height: 72px; border-radius: 36px; background: rgba(232, 232, 232, .8); display: flex; align-items: center; justify-content: center; }
.expand { left: 22px; }
.full { left: 197px; }
.legend { position: absolute; left: 24px; right: 26px; top: 11px; display: flex; flex-wrap: wrap; align-items: center; font-size: 34px; line-height: 46px; white-space: nowrap; }
.legend .pick { padding: 0 13px 0 13px; gap: 12px; font-size: 35px; margin-right: 12px; }
.legend > span { margin-right: 15px; padding-bottom: 2px; }
.legend .m5, .legend .m10, .amount, .rate { font-weight: 500; }
.legend .m5, .legend .m10, .amount { font-size: 33px; }
.amount { color: #37621f; }
.rate { color: #4aa8e8; font-size: 33px; }
.legend p { width: 100%; line-height: 28px; }
.legend.macd { font-size: 36px; }
.macd .pick { padding-right: 16px; margin-right: 10px; }
.macd > span { margin-right: 17px; }
.help { width: 36px; height: 36px; border: 2px solid #bbb; border-radius: 18px; color: #bbb; font-size: 26px; line-height: 30px; margin-right: 14px; }
.green { color: #2f991e; }
.macd a { margin-left: auto; color: #4a90e2; font-size: 35px; }
.legend .dea { color: #f4744a; font-size: 35px; }
.lines { position: absolute; left: 0; top: 0; pointer-events: none; }

.sections { display: flex; align-items: center; height: 108px; border-top: 12px solid #f4f4f4; padding-left: 57px; gap: 65px; font-size: 44px; color: #666; white-space: nowrap; overflow: hidden; }
.sections button { position: relative; flex: none; height: 108px; padding-top: 4px; }
.sections .level { margin: 0 2px 0 -34px; padding-top: 2px; font-family: "Open Sans", sans-serif; font-size: 59px; font-weight: 700; font-style: italic; color: #858585; }
.sections .on { font-size: 49px; font-weight: 500; color: #333; }
.sections .on::after { content: ""; position: absolute; left: 50%; bottom: 0; width: 50px; height: 2px; margin-left: -25px; background: #c0392b; }
.sections button:last-child { color: transparent; background: linear-gradient(90deg, #888, #fff 60px); background-clip: text; }

.dock { background: #242424; color: #d6d6d6; height: 197px; overflow: hidden; }
.actions { display: flex; height: 168px; font-size: 34px; }
.actions button { position: relative; flex: 208; display: flex; flex-direction: column; align-items: center; padding-top: 22px; }
.actions button svg { fill: none; stroke: #d6d6d6; stroke-width: 3px; }
.actions span { line-height: 46px; }
.actions .index { flex: 248; padding: 12px 0 0; color: #8d9390; }
.up { border: 14px solid transparent; border-bottom: 16px solid #b2b2b2; border-top: 0; }
.index span { margin-top: 10px; }
.index b { color: #22e622; font-weight: 400; line-height: 40px; margin-top: 17px; }
.badge { position: absolute; left: 50%; top: 24px; margin-left: 34px; width: 18px; height: 18px; border-radius: 9px; background: #ee2c2c; }
.home { display: block; width: 35%; height: 11px; border-radius: 6px; background: #b2b2b2; margin: 0 auto; }
</style>
